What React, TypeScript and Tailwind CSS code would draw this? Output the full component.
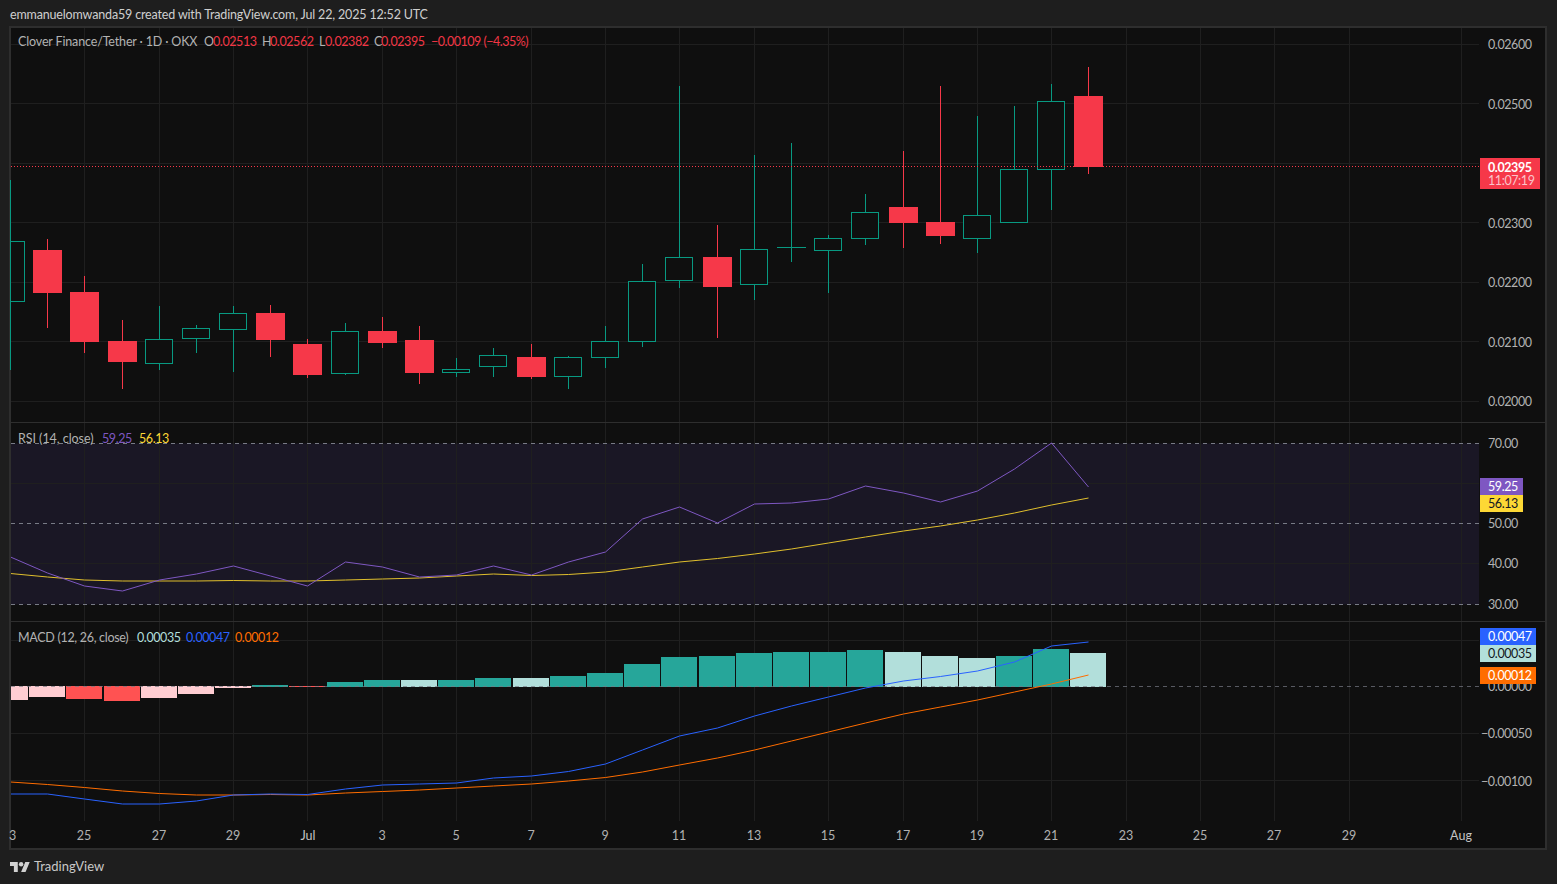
const XS = [10.5, 47.5, 84.5, 122.5, 159.5, 196.5, 233.5, 270.5, 307.5, 345.5, 382.5, 419.5, 456.5, 493.5, 531.5, 568.5, 605.5, 642.5, 679.5, 717.5, 754.5, 791.5, 828.5, 865.5, 903.5, 940.5, 977.5, 1014.5, 1051.5, 1088.5];

// [up, bodyTop, bodyBottom, wickTop, wickBottom] per day starting at Jun 24
const CANDLES: [number, number, number, number, number][] = [
  [0, 250, 293, 239, 328], [0, 292, 342, 276, 353], [0, 341, 362, 320, 389], [1, 339, 363, 306, 370],
  [1, 328, 338, 325, 353], [1, 313, 329, 306, 372], [0, 313, 340, 305, 357], [0, 344, 375, 339, 378],
  [1, 331, 373, 323, 375], [0, 331, 343, 317, 348], [0, 340, 373, 326, 384], [1, 369, 372, 358, 377],
  [1, 355, 366, 348, 377], [0, 357, 377, 344, 379], [1, 357, 376, 356, 389], [1, 341, 357, 326, 368],
  [1, 281, 341, 264, 347], [1, 257, 280, 86, 288], [0, 257, 287, 225, 338], [1, 249, 284, 155, 300],
  [1, 247, 247, 143, 262], [1, 238, 250, 235, 293], [1, 212, 238, 194, 245], [0, 207, 223, 151, 248],
  [0, 222, 236, 86, 244], [1, 215, 238, 116, 253], [1, 169, 222, 106, 222], [1, 101, 169, 84, 210],
  [0, 96, 167, 67, 174],
];

const RSI = [557, 573, 586, 591, 580, 574, 566, 576, 586, 562, 567, 577, 575, 566, 575, 562, 552, 519, 507, 523, 504, 503, 499, 486, 493, 502, 491, 469, 443, 487];
const RSI_MA = [573.5, 577, 580, 581, 581, 581, 580.5, 581, 581, 580, 579, 578, 576, 574, 575.5, 574.5, 572, 567, 562, 558.5, 554, 549, 543, 537, 531, 526, 520, 513, 505, 498];
const MACD = [794, 794, 799, 804, 804, 801, 795, 794, 794.5, 789, 785, 784, 783, 778, 776, 771.5, 764, 750, 736, 728, 716, 706, 697, 688, 681, 676.5, 671, 662, 646, 642];
const SIGNAL = [782, 784.5, 787.5, 791, 793.5, 795, 795, 794.5, 795, 793, 791.5, 790, 788, 786, 784, 781, 777.5, 772, 765, 758, 750, 741, 732, 723, 714, 707, 700, 692, 684, 675];

const T = "#26a69a", P = "#b2dfdb", R = "#ff5252", N = "#ffcdd2";
// [top, bottom, colour]
const HIST: [number, number, string][] = [
  [686, 700, N], [686, 697, N], [686, 699, R], [686, 701, R], [686, 698, N], [686, 694, N], [686, 688, N], [685, 687, T],
  [686, 687, R], [682, 687, T], [680, 687, T], [680, 687, P], [680, 687, T], [678, 687, T], [678, 687, P], [676, 687, T],
  [673, 687, T], [664, 687, T], [657, 687, T], [656, 687, T], [653, 687, T], [652, 687, T], [652, 687, T], [650, 687, T],
  [652, 687, P], [656, 687, P], [658, 687, P], [656, 687, T], [649, 687, T], [653, 687, P],
];

const GRID_X = [84.5, 159.5, 233.5, 307.5, 382.5, 456.5, 531.5, 605.5, 679.5, 754.5, 828.5, 903.5, 977.5, 1051.5, 1126.5, 1200.5, 1274.5, 1349.5, 1461.5];
const DATES: [string, number, boolean][] = [["25", 84, false], ["27", 159, false], ["29", 233, false], ["Jul", 308, true], ["3", 382, false], ["5", 456, false], ["7", 531, false], ["9", 605, false], ["11", 679, false], ["13", 754, false], ["15", 828, false], ["17", 903, false], ["19", 977, false], ["21", 1051, false], ["23", 1126, false], ["25", 1200, false], ["27", 1274, false], ["29", 1349, false], ["Aug", 1461, true]];

const GRID = "#1f1f1f";
const GREEN = "#089981";
const RED = "#f63849";
const pts = (ys: number[]) => ys.map((y, i) => `${XS[i]},${y}`).join(" ");

function VGrid({ y1, y2 }: { y1: number; y2: number }) {
  return (
    <>
      {GRID_X.map((x) => (
        <line key={x} x1={x} x2={x} y1={y1} y2={y2} stroke={GRID} strokeWidth={1} />
      ))}
    </>
  );
}

function HGrid({ ys }: { ys: number[] }) {
  return (
    <>
      {ys.map((y) => (
        <line key={y} x1={11} x2={1479} y1={y} y2={y} stroke={GRID} strokeWidth={1} />
      ))}
    </>
  );
}

function Candle({ x, c }: { x: number; c: [number, number, number, number, number] }) {
  const [up, top, bottom, hi, lo] = c;
  const col = up ? GREEN : RED;
  return (
    <g shapeRendering="crispEdges">
      <line x1={x} x2={x} y1={hi} y2={lo} stroke={col} strokeWidth={1} />
      {up ? (
        top === bottom ? (
          <line x1={x - 14.5} x2={x + 14.5} y1={top + 0.5} y2={top + 0.5} stroke={col} />
        ) : (
          <rect x={x - 14} y={top + 0.5} width={27} height={bottom - top} fill="#0f0f0f" stroke={col} strokeWidth={1} />
        )
      ) : (
        <rect x={x - 14.5} y={top} width={29} height={bottom - top} fill={col} />
      )}
    </g>
  );
}

function AxisLabel({ y, children }: { y: number; children: string }) {
  return (
    <span className="absolute leading-[16px] tracking-[-0.4px] text-[#b2b2b2]" style={{ top: y - 7, left: children.startsWith("−") ? 2 : 9 }}>
      {children}
    </span>
  );
}

function Pill({ y, w, bg, text, label }: { y: number; w: string; bg: string; text: string; label: string }) {
  return (
    <div className={`absolute left-[1px] h-[17px] pl-[8px] leading-[17px] tracking-[-0.4px] ${w} ${bg} ${text}`} style={{ top: y }}>
      {label}
    </div>
  );
}

export default function App() {
  return (
    <div className="flex h-[884px] w-[1557px] flex-col overflow-hidden bg-[#1e1e1e] font-['Lato',sans-serif] text-[12.5px] text-[#b2b2b2]">
      <header className="flex h-[26px] shrink-0 items-center pl-[10px] pt-[4px] tracking-[-0.16px] text-[#cfcfcf]">
        emmanuelomwanda59 created with TradingView.com, Jul 22, 2025 12:52 UTC
      </header>

      <main className="ml-[9px] flex h-[824px] w-[1538px] shrink-0 flex-col border-2 border-[#2e2e2e] bg-[#0f0f0f]">
        <div className="flex h-[394px] shrink-0">
          <div className="relative w-[1468px] shrink-0">
            <svg width={1468} height={394} viewBox="11 28 1468 394" className="block overflow-visible">
              <VGrid y1={28} y2={422} />
              <HGrid ys={[44.5, 103.5, 163.5, 222.5, 282.5, 341.5, 401.5]} />
              <path d="M10.5 180V370M10 241.5H24.5V301.5H10" fill="none" stroke={GREEN} strokeWidth={1} shapeRendering="crispEdges" />
              {CANDLES.map((c, i) => (
                <Candle key={i} x={XS[i + 1]} c={c} />
              ))}
              <line x1={11} x2={1479} y1={166.5} y2={166.5} stroke={RED} strokeWidth={1} strokeDasharray="1 2" />
            </svg>
            <div className="absolute left-[7px] top-[6px] flex h-[16px] items-center whitespace-nowrap leading-[16px]">
              <span className="w-[186px] tracking-[-0.15px]">Clover Finance/Tether · 1D · OKX</span>
              <span className="w-[9px]">O</span>
              <span className="w-[49px] tracking-[-0.4px] text-[#f23645]">0.02513</span>
              <span className="w-[8px]">H</span>
              <span className="w-[49px] tracking-[-0.4px] text-[#f23645]">0.02562</span>
              <span className="w-[6px]">L</span>
              <span className="w-[49px] tracking-[-0.4px] text-[#f23645]">0.02382</span>
              <span className="w-[7px]">C</span>
              <span className="w-[50px] tracking-[-0.4px] text-[#f23645]">0.02395</span>
              <span className="tracking-[-0.5px] text-[#f23645]">−0.00109 (−4.35%)</span>
            </div>
          </div>
          <div className="relative flex-1">
            <AxisLabel y={16}>0.02600</AxisLabel>
            <AxisLabel y={76}>0.02500</AxisLabel>
            <AxisLabel y={195}>0.02300</AxisLabel>
            <AxisLabel y={254}>0.02200</AxisLabel>
            <AxisLabel y={314}>0.02100</AxisLabel>
            <AxisLabel y={373}>0.02000</AxisLabel>
            <div className="absolute left-[1px] top-[130px] h-[31px] w-[60px] bg-[#f63849] pl-[8px] pt-[3px] leading-[13px] tracking-[-0.4px] text-white">
              <div className="font-bold">0.02395</div>
              <div className="text-[#fbc4ca]">11:07:19</div>
            </div>
          </div>
        </div>

        <div className="flex h-[199px] shrink-0 border-t border-[#2e2e2e]">
          <div className="relative w-[1468px] shrink-0">
            <svg width={1468} height={198} viewBox="11 423 1468 198" className="block">
              <rect x={11} y={443.5} width={1468} height={161} fill="#1a1725" />
              <VGrid y1={423} y2={621} />
              <HGrid ys={[483.5, 563.5]} />
              {[443.5, 523.5, 604.5].map((y) => (
                <line key={y} x1={11} x2={1479} y1={y} y2={y} stroke="#787b86" strokeWidth={1} strokeDasharray="4 4" />
              ))}
              <polyline points={pts(RSI_MA)} fill="none" stroke="#e0bf2d" strokeWidth={1} />
              <polyline points={pts(RSI)} fill="none" stroke="#7e57c2" strokeWidth={1} />
            </svg>
            <div className="absolute left-[7px] top-[8px] flex h-[16px] items-center whitespace-nowrap leading-[16px]">
              <span className="w-[84px] tracking-[-0.05px]">RSI (14, close)</span>
              <span className="w-[37px] tracking-[-0.4px] text-[#7e57c2]">59.25</span>
              <span className="tracking-[-0.4px] text-[#fdd835]">56.13</span>
            </div>
          </div>
          <div className="relative flex-1">
            <AxisLabel y={20}>70.00</AxisLabel>
            <AxisLabel y={100}>50.00</AxisLabel>
            <AxisLabel y={140}>40.00</AxisLabel>
            <AxisLabel y={181}>30.00</AxisLabel>
            <Pill y={55} w="w-[43px]" bg="bg-[#7e57c2]" text="text-white" label="59.25" />
            <Pill y={72} w="w-[43px]" bg="bg-[#fdd835]" text="text-[#131722]" label="56.13" />
          </div>
        </div>

        <div className="flex h-[200px] shrink-0 border-t border-[#2e2e2e]">
          <div className="relative w-[1468px] shrink-0">
            <svg width={1468} height={199} viewBox="11 622 1468 199" className="block">
              <VGrid y1={622} y2={821} />
              <HGrid ys={[640.5, 733.5, 780.5]} />
              {HIST.map(([top, bottom, col], i) => {
                const c = Math.round(XS[i] - 0.5);
                return <rect key={i} x={c - 18} y={top} width={36} height={bottom - top} fill={col} shapeRendering="crispEdges" />;
              })}
              <line x1={11} x2={1479} y1={686.5} y2={686.5} stroke="#787b86" strokeWidth={1} strokeDasharray="4 4" opacity={0.7} />
              <polyline points={pts(SIGNAL)} fill="none" stroke="#ff6d00" strokeWidth={1} />
              <polyline points={pts(MACD)} fill="none" stroke="#2962ff" strokeWidth={1} />
            </svg>
            <div className="absolute left-[7px] top-[8px] flex h-[16px] items-center whitespace-nowrap leading-[16px]">
              <span className="w-[119px] tracking-[-0.3px]">MACD (12, 26, close)</span>
              <span className="w-[49px] tracking-[-0.4px] text-[#b2dfdb]">0.00035</span>
              <span className="w-[49px] tracking-[-0.4px] text-[#2962ff]">0.00047</span>
              <span className="tracking-[-0.4px] text-[#ff6d00]">0.00012</span>
            </div>
          </div>
          <div className="relative flex-1">
            <AxisLabel y={64}>0.00000</AxisLabel>
            <AxisLabel y={111}>−0.00050</AxisLabel>
            <AxisLabel y={159}>−0.00100</AxisLabel>
            <Pill y={6} w="w-[56px]" bg="bg-[#2962ff]" text="text-white" label="0.00047" />
            <Pill y={23} w="w-[56px]" bg="bg-[#b2dfdb]" text="text-[#131722]" label="0.00035" />
            <Pill y={45} w="w-[56px]" bg="bg-[#ff6d00]" text="text-white" label="0.00012" />
          </div>
        </div>

        <div className="relative flex-1">
          <span className="absolute left-[-2px] top-[7px] w-[7px] overflow-hidden text-right leading-[16px]">3</span>
          {DATES.map(([label, x, strong]) => (
            <span
              key={label + x}
              className={`absolute top-[7px] -translate-x-1/2 leading-[16px] ${strong ? "text-[#c4c4c4]" : "text-[#b2b2b2]"}`}
              style={{ left: x - 11 }}
            >
              {label}
            </span>
          ))}
        </div>
      </main>

      <footer className="flex flex-1 items-center gap-[4px] pl-[10px]">
        <svg width={20} height={12} viewBox="0 3 36 20" fill="#d1d1d1" className="shrink-0">
          <path d="M14 22H7V11H0V4h14v18zM28 22h-8l7.5-18h8L28 22z" />
          <circle cx={20} cy={8} r={4} />
        </svg>
        <span className="text-[13px] text-[#c8c8c8]">TradingView</span>
      </footer>
    </div>
  );
}
